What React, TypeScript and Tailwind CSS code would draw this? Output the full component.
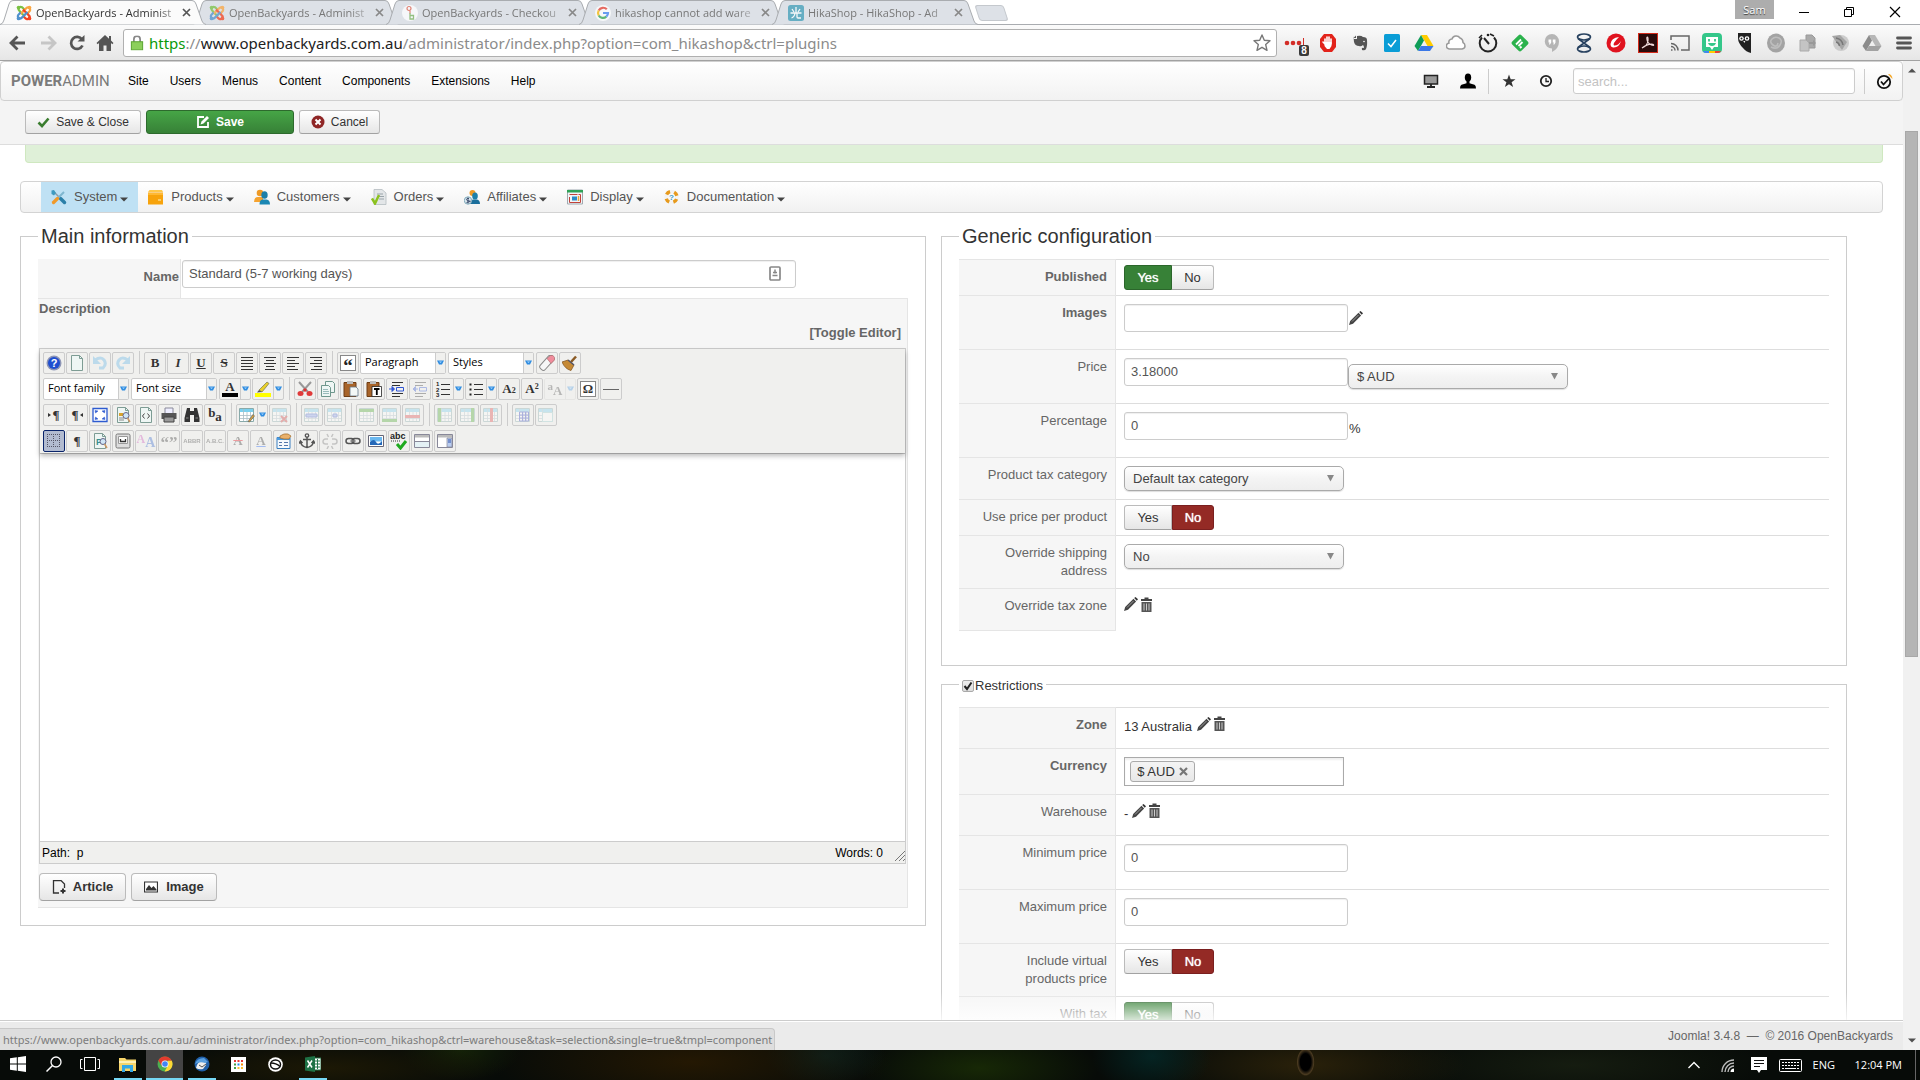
import React from "react";

type Kids = { children?: React.ReactNode };

const Svg = ({ s = 20, vb = 20, children, cls = "" }: { s?: number; vb?: number; cls?: string } & Kids) => (
  <svg width={s} height={s} viewBox={`0 0 ${vb} ${vb}`} fill="none" className={"shrink-0 " + cls} aria-hidden="true">
    {children}
  </svg>
);

/* ---------- Browser tabs ---------- */

const JoomlaIcon = () => (
  <Svg s={16} vb={16}>
    <path d="M8.500 4.500 6 2.200Q3.500 1 2.500 3.500 2 5 4 6.500L9 11.500" stroke="#7ac143" strokeWidth="2.200" />
    <path d="M11.500 8.500 13.800 6Q15 3.500 12.500 2.500 11 2 9.500 4L4.500 9" stroke="#f9a541" strokeWidth="2.200" />
    <path d="M7.500 11.500 10 13.800Q12.500 15 13.500 12.500 14 11 12 9.500L7 4.500" stroke="#f44321" strokeWidth="2.200" />
    <path d="M4.500 7.500 2.200 10Q1 12.500 3.500 13.500 5 14 6.500 12L11.500 7" stroke="#5091cd" strokeWidth="2.200" />
    <circle cx="2.600" cy="2.600" r="1.900" fill="#7ac143" />
    <circle cx="13.400" cy="2.600" r="1.900" fill="#f9a541" />
    <circle cx="13.400" cy="13.400" r="1.900" fill="#f44321" />
    <circle cx="2.600" cy="13.400" r="1.900" fill="#5091cd" />
  </Svg>
);
const BackyardIcon = () => (
  <Svg s={16} vb={16}>
    <circle cx="8" cy="8" r="8" fill="#fff" />
    <circle cx="7" cy="3.500" r="2" stroke="#e0614d" strokeWidth="1.200" />
    <path d="M8 5.500v3" stroke="#e0614d" strokeWidth="1.200" />
    <path d="M8 8v6h3.500V10.500H8" stroke="#7bb661" strokeWidth="1.300" />
  </Svg>
);
const GoogleIcon = () => (
  <Svg s={16} vb={16}>
    <circle cx="8" cy="8" r="8" fill="#fff" />
    <path d="M11.800 4.300A5 5 0 0 0 3.700 5.500" stroke="#ea4335" strokeWidth="2.200" />
    <path d="M3.700 5.500a5 5 0 0 0 0 5" stroke="#fbbc05" strokeWidth="2.200" />
    <path d="M3.700 10.500a5 5 0 0 0 7.600 1.200" stroke="#34a853" strokeWidth="2.200" />
    <path d="M8 8h5a5 5 0 0 1-1.700 3.700" stroke="#4285f4" strokeWidth="2.200" />
  </Svg>
);
const HikaIcon = () => (
  <Svg s={16} vb={16}>
    <rect width="16" height="16" rx="2.500" fill="#3f9db8" />
    <path d="M8 2v6M4 4l2 3M12 4l-2 3M2.500 8h11M7 8q-.5 4-3.500 5M9 8v4q0 1 1 1h3" stroke="#fff" strokeWidth="1.300" />
  </Svg>
);

const TABS = [
  { t: "OpenBackyards - Administ", i: <JoomlaIcon />, on: true },
  { t: "OpenBackyards - Administ", i: <JoomlaIcon /> },
  { t: "OpenBackyards - Checkou", i: <BackyardIcon /> },
  { t: "hikashop cannot add ware", i: <GoogleIcon /> },
  { t: "HikaShop - HikaShop - Ad", i: <HikaIcon /> },
];

const TabStrip = () => (
  <div className="flex h-6 items-stretch bg-white">
    {TABS.map((tab, n) => (
      <div key={n} className={"relative w-[193px] shrink-0 " + (tab.on ? "z-20" : "z-10")}>
        <svg className="absolute left-0 top-0" width="206" height="25" viewBox="0 0 206 25" fill="none" aria-hidden="true">
          <path
            d="M0 24.500Q3 24 4 20L9 4Q10 .5 13 .5H192Q195 .5 196 4L202 21Q203 24 206 24.500Z"
            fill={tab.on ? "#fbfbfb" : "#dde1e7"}
          />
          <path d="M0 24.500Q3 24 4 20L9 4Q10 .5 13 .5H192Q195 .5 196 4L202 21Q203 24 206 24.500" stroke="#a9acb0" />
        </svg>
        <div className="relative flex h-6 items-center pl-4 pt-px">
          <span className={tab.on ? "" : "opacity-75"}>{tab.i}</span>
          <button
            className={
              "ml-1 w-[142px] whitespace-nowrap text-left text-[11px] leading-4 [mask-image:linear-gradient(to_right,black_85%,#0005)] " +
              (tab.on ? "text-[#333]" : "text-[#777]")
            }
          >
            {tab.t}
          </button>
          <button className="ml-1 p-0.5" aria-label="Close tab">
            <Svg s={9} vb={9}>
              <path d="M1 1l7 7M8 1l-7 7" stroke={tab.on ? "#555" : "#888"} strokeWidth="1.700" />
            </Svg>
          </button>
        </div>
      </div>
    ))}
    <button className="ml-3 mt-[5px] h-4 w-[29px] skew-x-[18deg] rounded-[3px] border border-[#c4c8cd] bg-[#dde1e7]" aria-label="New tab" />
    <div className="flex-1" />
    <button className="mr-[25px] h-[19px] w-[39px] bg-[#adadad] text-[11px] leading-4 text-white [text-shadow:0_1px_1px_#333]">Sam</button>
    <button className="w-4" aria-label="Minimise">
      <svg width="10" height="24" className="shrink-0"><path d="M0 12.500h10" stroke="#000" /></svg>
    </button>
    <button className="ml-[29px] w-4" aria-label="Restore">
      <svg width="12" height="24" fill="none"><path d="M.5 9.500h7v7h-7zM2.500 9V7.500h7v7H8" stroke="#000" /></svg>
    </button>
    <button className="ml-[29px] mr-[19px] w-3" aria-label="Close">
      <svg width="12" height="24" fill="none"><path d="M1 7l10 10M11 7L1 17" stroke="#000" strokeWidth="1.200" /></svg>
    </button>
  </div>
);

/* ---------- Browser toolbar ---------- */

const EXT: { n: string; i: React.ReactNode }[] = [
  {
    n: "Passwords",
    i: (
      <Svg s={26} vb={26}>
        <g fill="#d32d27"><circle cx="4" cy="13" r="2.300" /><circle cx="10" cy="13" r="2.300" /><circle cx="16" cy="13" r="2.300" /></g>
        <path d="M20.500 8v10" stroke="#d32d27" />
        <rect x="16" y="15" width="10" height="11" rx="2" fill="#3a3a3a" />
        <text x="21" y="24" fontSize="10" fontWeight="700" fill="#fff" textAnchor="middle" fontFamily="Liberation Sans">8</text>
      </Svg>
    ),
  },
  {
    n: "Ad blocker",
    i: (
      <Svg><path d="M6 1h8l4 5v8l-4 5H6l-4-5V6z" fill="#e2231a" /><path d="M7 11V6M9 10V4M11 10V4M13 11V6M7 11l-2-2" stroke="#fff" strokeWidth="1.600" strokeLinecap="round" /><path d="M6.500 9h7v4l-2 3H9l-2.500-3z" fill="#fff" /></Svg>
    ),
  },
  {
    n: "Notes",
    i: (
      <Svg><path d="M4 6h3V3q4-1 6 1 4 0 4 3 .5 6-1 9-1 2-4 1-1-3 2-2 0-2-1-3-2 2-4 1-4 0-5-4-.5-4 0-6z" fill="#555" /><path d="M3.500 5L6 2.500V5z" fill="#555" /><circle cx="14" cy="8.500" r=".8" fill="#fff" /></Svg>
    ),
  },
  { n: "Tasks", i: <Svg><rect x="2" y="1" width="16" height="18" rx="1.500" fill="#0a9dd6" /><path d="M6 10.500l3 3 5-6.500" stroke="#fff" strokeWidth="1.500" /></Svg> },
  {
    n: "Drive",
    i: <Svg><path d="M7 2h6l6.500 11h-6z" fill="#fc0" /><path d="M7 2l3 5.500L4 18 .5 13z" fill="#0f9d58" /><path d="M7 13h12.500L16 18H4z" fill="#3b78e7" /></Svg>,
  },
  { n: "Cloud", i: <Svg><path d="M4 16a3 3 0 0 1-1-6 3 3 0 0 1 3-4 4.500 4.500 0 0 1 8-1q3 1 3 4.500 2 1 2 3.500t-3 3z" fill="#fff" stroke="#999" strokeWidth="1.500" /></Svg> },
  {
    n: "Timer",
    i: <Svg><path d="M4 4.500a8.300 8.300 0 1 0 12 0" stroke="#222" strokeWidth="2" /><path d="M6 5l5 6" stroke="#222" strokeWidth="2" /><circle cx="10" cy="2" r="1.300" fill="#222" /><path d="M1 5l3-3M12 1l4 2" stroke="#222" strokeWidth="1.600" /></Svg>,
  },
  { n: "Feeds", i: <Svg><rect x="3.500" y="3.500" width="13" height="13" rx="2" transform="rotate(45 10 10)" fill="#2bb24c" /><path d="M6 11.500l5-5M8.500 13l4-4M10 15l1.500-1.500" stroke="#fff" strokeWidth="1.800" /></Svg> },
  { n: "Hangouts", i: <Svg><path d="M10 1a7 7.500 0 0 1 7 7.500q0 7-7 10.500v-3.500a7 7 0 0 1 0-14.500z" fill="#b5b5b5" /><path d="M6.500 6.500h2.700v3L8 11.500H7L7.500 9.500h-1zM10.800 6.500h2.700v3l-1.200 2h-1l.5-2h-1z" fill="#fff" /></Svg> },
  { n: "Hourglass", i: <Svg><ellipse cx="10" cy="4" rx="6.500" ry="3" stroke="#27415f" strokeWidth="1.700" /><ellipse cx="10" cy="16" rx="6.500" ry="3" stroke="#27415f" strokeWidth="1.700" /><path d="M4 5.500l12 9M16 5.500l-12 9" stroke="#27415f" strokeWidth="1.700" /></Svg> },
  { n: "Security", i: <Svg><ellipse cx="10" cy="10" rx="9.500" ry="9.500" fill="#e0131f" /><path d="M13 4Q5 5 4.500 11q0 3 2.500 3.500Q13 15 15 8q-3 5-7 4.500Q6 11 13 4z" fill="#fff" /></Svg> },
  { n: "PDF", i: <Svg><rect x=".5" y=".5" width="19" height="19" fill="#2b0b0b" stroke="#d32a1a" /><path d="M4 15q5-2 6-7 .3-4-.7-4t0 4q2 4 6 4.500 1-.5-.5-1.300-5-.8-10.800 3.800z" stroke="#f1dada" strokeWidth="1.100" /></Svg> },
  { n: "Cast", i: <Svg><path d="M1 7V3h18v14h-8" stroke="#666" strokeWidth="1.500" /><path d="M1 17h1.500M1 13.500A4 4 0 0 1 5 17.500M1 10.500a7 7 0 0 1 7 7" stroke="#666" strokeWidth="1.500" /></Svg> },
  {
    n: "Stickers",
    i: <Svg><rect width="20" height="20" rx="4" fill="#34c78a" /><path d="M4 4h12v10h-4l-2 3-2-3H4z" fill="#fff" /><path d="M7 6v2.500M13 6v2.500" stroke="#34c78a" strokeWidth="1.800" /><path d="M6 10h8q-1 3-4 3t-4-3z" fill="#34c78a" /><path d="M1 18h6v2H4q-2 0-3-2z" fill="#4285f4" /><path d="M7 18h6v2H7z" fill="#fc0" /><path d="M13 18h6q-1 2-3 2h-3z" fill="#ea4335" /></Svg>,
  },
  { n: "Owl", i: <Svg><path d="M4 0h13v20q-5-1-8-5Q4 10 4 5z" fill="#222" /><circle cx="7.500" cy="5.500" r="2.300" fill="#fff" /><circle cx="13" cy="5.500" r="2.300" fill="#fff" /><circle cx="7.500" cy="5.500" r="1" fill="#222" /><circle cx="13" cy="5.500" r="1" fill="#222" /><path d="M9.300 8h2l-1 2z" fill="#fff" /></Svg> },
  { n: "Spiral", i: <Svg><ellipse cx="10" cy="10" rx="9" ry="9.500" fill="#a3a3a3" /><path d="M5 14q6 3 9-2t-1-7-7 1 1 6 5-2" stroke="#bdbdbd" strokeWidth="1.600" /></Svg> },
  { n: "Pages", i: <Svg><path d="M8 2h6l3 3v10H8z" fill="#aaa" stroke="#999" /><path d="M2 7h6l3 3v8H2z" fill="#c4c4c4" stroke="#aaa" /><path d="M11 9h4v-2l3 3-3 3v-2h-4z" fill="#999" /></Svg> },
  { n: "Feed reader", i: <Svg><circle cx="11" cy="10" r="8" fill="#ccc" /><path d="M2 3l8-1 7 7-5 8z" fill="#a5a5a5" /><path d="M6 5q6 1 7 7M6 9q3 .5 3.500 4" stroke="#777" strokeWidth="1.500" /></Svg> },
  { n: "Drive offline", i: <Svg><path d="M7 2h6l6.500 11h-6z" fill="#b7b7b7" /><path d="M7 2l3 5.500L4 18 .5 13z" fill="#8b8b8b" /><path d="M7 13h12.500L16 18H4z" fill="#a2a2a2" /></Svg> },
];

const BrowserBar = () => (
  <div className="flex h-[37px] items-center border-b border-t border-b-[#a3a3a3] border-t-[#a9acb0] bg-gradient-to-b from-[#fbfbfb] to-[#e6e6e6] pl-2">
    <button className="w-[30px]" aria-label="Back">
      <Svg><path d="M17 10H3M9.500 3.500L3 10l6.500 6.500" stroke="#555" strokeWidth="2.800" /></Svg>
    </button>
    <button className="w-[29px]" aria-label="Forward">
      <Svg><path d="M3 10h14M10.500 3.500L17 10l-6.500 6.500" stroke="#c6c6c6" strokeWidth="2.800" /></Svg>
    </button>
    <button className="w-7" aria-label="Reload">
      <Svg><path d="M15.500 12.500a6 6 0 1 1-.5-6" stroke="#555" strokeWidth="2.700" /><path d="M10.500 8.500H17.500V2z" fill="#555" /></Svg>
    </button>
    <button className="w-7" aria-label="Home">
      <Svg><path d="M10 2L1.500 10l1.200 1.200L4 10v8h4.500v-5.500h3V18H16v-8l1.300 1.200L18.500 10 16 7.600V3h-2v2.700z" fill="#555" /></Svg>
    </button>
    <div className="flex h-7 min-w-0 flex-1 items-center rounded-[3px] border border-[#b0b0b0] bg-white pl-[7px] pr-1">
      <Svg s={12} vb={12} cls="scale-125"><path d="M3.500 5.500V3a2.500 2.500 0 0 1 5 0v2.500" stroke="#888" strokeWidth="1.400" /><rect x="1.500" y="5" width="9" height="6.500" fill="#8ccf5b" stroke="#5ba432" strokeWidth=".8" /></Svg>
      <div className="ml-[6px] flex-1 whitespace-nowrap font-['Noto_Sans'] text-[15px] leading-6 text-[#8b8b8b]">
        <span className="text-[#0a9a0a]">https</span>://<span className="text-[#222]">www.openbackyards.com.au</span>/administrator/index.php?option=com_hikashop&amp;ctrl=plugins
      </div>
      <button aria-label="Bookmark">
        <Svg><path d="M10 2l2.300 5.300 5.700.5-4.300 3.800 1.300 5.700-5-3-5 3 1.300-5.700L2 7.800l5.700-.5z" stroke="#777" strokeWidth="1.400" strokeLinejoin="round" /></Svg>
      </button>
    </div>
    <div className="ml-[3px] flex">
      {EXT.map((e) => (
        <button key={e.n} aria-label={e.n} className="flex h-8 w-8 items-center justify-center">
          {e.i}
        </button>
      ))}
    </div>
    <button className="flex w-8 justify-center" aria-label="Menu">
      <Svg s={16} vb={16}><path d="M1.500 3h13M1.500 8h13M1.500 13h13" stroke="#555" strokeWidth="2.800" strokeLinecap="round" /></Svg>
    </button>
  </div>
);

/* ---------- Admin header ---------- */

const AdminBar = () => (
  <header className="flex h-10 items-center rounded-[4px] border border-[#d0d0d0] bg-gradient-to-b from-white to-[#f2f2f2] pl-[10px] pr-2 shadow-sm">
    <a href="#" className="w-[117px] font-['Liberation_Sans_Narrow','Roboto'] text-[15px] leading-5 text-[#7b7b7b]">
      <b>POWER</b>ADMIN
    </a>
    <nav className="flex flex-1 gap-[21px] text-[12px] leading-[18px] text-black">
      {["Site", "Users", "Menus", "Content", "Components", "Extensions", "Help"].map((m) => (
        <a key={m} href="#">{m}</a>
      ))}
    </nav>
    <button aria-label="View site" className="mr-[21px]">
      <Svg s={16} vb={16}><rect x="1.500" y="2.500" width="13" height="8.500" fill="#999" stroke="#222" strokeWidth="1.500" /><path d="M8 11v3M4 14h8" stroke="#222" strokeWidth="1.800" /></Svg>
    </button>
    <button aria-label="User" className="mr-3">
      <Svg s={16} vb={16}><ellipse cx="8" cy="4.500" rx="3.200" ry="4" fill="#000" /><path d="M6.500 8h3v2.300l5 1.500Q16 12.500 16 15.500H0Q0 12.500 1.500 11.800l5-1.500z" fill="#000" /></Svg>
    </button>
    <div className="h-[25px] w-px bg-[#ccc]" />
    <button aria-label="Favourites" className="ml-3 mr-[21px]">
      <Svg s={16} vb={16}><path d="M8 1.500l1.700 4.700h4.800l-3.900 3 1.500 4.800L8 11.200 3.900 14l1.500-4.800-3.900-3h4.800z" fill="#333" /></Svg>
    </button>
    <button aria-label="History" className="mr-[19px]">
      <Svg s={16} vb={16}><circle cx="8" cy="8" r="5.200" stroke="#222" strokeWidth="1.800" /><path d="M8 5v3.500h3" stroke="#222" strokeWidth="1.300" /></Svg>
    </button>
    <input aria-label="Search" placeholder="search..." className="h-[26px] w-[282px] rounded-[3px] border border-[#ccc] bg-white px-1 text-[13px] text-[#555] shadow-[inset_0_1px_1px_#0001] placeholder:text-[#c3c3c3]" />
    <div className="ml-[9px] h-[25px] w-px bg-[#ccc]" />
    <button aria-label="Status" className="ml-[11px]">
      <Svg s={18} vb={18}><circle cx="8" cy="10" r="6.200" stroke="#111" strokeWidth="1.800" /><path d="M5 9.500l2.500 3L13.500 6" stroke="#111" strokeWidth="1.800" /><path d="M12 2q4 0 4.500 5l-2-2z" fill="#f5a623" /></Svg>
    </button>
  </header>
);

const ActionBar = () => (
  <div className="flex h-11 shrink-0 items-start gap-[5px] border-b border-[#ddd] bg-[#f4f4f4] pl-[25px] pt-[9px] text-[12px] leading-4 text-[#333]">
    <button className="flex h-6 w-[116px] items-center justify-center gap-[6px] rounded-[3px] border border-[#bbb] border-b-[#a2a2a2] bg-gradient-to-b from-white to-[#e6e6e6]">
      <Svg s={13} vb={13}><path d="M1.500 6.500l3.500 3.500L11.500 2.500" stroke="#3a7d2f" strokeWidth="2.600" /></Svg>
      Save &amp; Close
    </button>
    <button className="flex h-6 w-[148px] items-center justify-center gap-[6px] rounded-[3px] border border-[#2d6a2d] bg-gradient-to-b from-[#46a546] to-[#378137] font-bold text-white">
      <Svg s={14} vb={14}><path d="M8 2H2v10h10V7" stroke="#fff" strokeWidth="1.800" /><path d="M4.500 9.500l1-3L11 1l2 2-5.500 5.500z" fill="#fff" /></Svg>
      Save
    </button>
    <button className="flex h-6 w-[81px] items-center justify-center gap-[6px] rounded-[3px] border border-[#bbb] border-b-[#a2a2a2] bg-gradient-to-b from-white to-[#e6e6e6]">
      <Svg s={14} vb={14}><circle cx="7" cy="7" r="6.500" fill="#8f2626" /><path d="M4.500 4.500l5 5M9.500 4.500l-5 5" stroke="#fff" strokeWidth="2" /></Svg>
      Cancel
    </button>
  </div>
);

/* ---------- Component menu ---------- */

const MENU: { n: string; i: React.ReactNode }[] = [
  { n: "System", i: <Svg s={16} vb={16}><path d="M2 2l8 8" stroke="#8a9ba8" strokeWidth="1.500" /><path d="M9.500 9.500l4 4" stroke="#2b7fa8" strokeWidth="3.500" strokeLinecap="round" /><path d="M13 3L7.500 8.500" stroke="#7fb6cf" strokeWidth="2" /><path d="M6.500 9.500l-4 4" stroke="#f09a2a" strokeWidth="3.300" strokeLinecap="round" /><path d="M.5 1.500L3 1l2 3-2 2.500L.5 5z" fill="#3f9bc0" /></Svg> },
  { n: "Products", i: <Svg s={16} vb={16}><path d="M0 3l1.500-2H14l1 2z" fill="#ffc84a" /><path d="M0 3.500h15V15.500H0z" fill="#f7a30c" /><path d="M0 4h15v2H0z" fill="#ffb933" /><path d="M10 11h3" stroke="#fff3c4" /></Svg> },
  { n: "Customers", i: <Svg s={16} vb={16}><circle cx="6" cy="4" r="3.300" fill="#ee9a26" /><path d="M0 13q0-5 4-5h5v5z" fill="#f5a32f" /><ellipse cx="10.500" cy="6" rx="3.200" ry="3.800" fill="#1d7fa8" /><path d="M5.500 15.500q0-4.500 3-5h4q3.500.5 3.500 5z" fill="#1b87b3" /></Svg> },
  { n: "Orders", i: <Svg s={16} vb={16}><path d="M3 .5h8L15 4v11.500H3z" fill="#e3e6e8" stroke="#b5bcc0" strokeWidth=".8" /><path d="M6 5h6M6 7.500h7M8 10h5" stroke="#9aa4aa" /><path d="M1 9.500l3 5L8 6" stroke="#8cc21f" strokeWidth="2.500" /></Svg> },
  { n: "Affiliates", i: <Svg s={16} vb={16}><circle cx="8.500" cy="4" r="3" fill="#ee9a26" /><ellipse cx="11" cy="7" rx="2.800" ry="3.500" fill="#1d7fa8" /><path d="M6 15q0-4 3-4.500h4q3 .5 3 4.500z" fill="#1b6f9c" /><circle cx="4" cy="11.500" r="3.700" fill="#dbe8ee" stroke="#7fa9bb" /><path d="M5 9.500q-2.500-.5-2.500 1t3 1.500-3 1.500M4 8.500v6" stroke="#346" strokeWidth=".9" /></Svg> },
  { n: "Display", i: <Svg s={16} vb={16}><path d="M.5 1h15v14H.5z" fill="#f3f5f7" stroke="#9fa9b0" /><path d="M0 1h16v2.500H0z" fill="#2fa257" /><path d="M2.500 5.500h8M2.500 8v5.500h11v-8h-2" stroke="#c0423a" /><path d="M5 7.500h5v4H5z" fill="#2c8cc8" /><path d="M11.500 7v5" stroke="#e8a33a" strokeWidth="1.500" /></Svg> },
  { n: "Documentation", i: <Svg s={16} vb={16}><circle cx="7.500" cy="8" r="5.500" stroke="#f3f3f3" strokeWidth="3.500" /><circle cx="7.500" cy="8" r="5.500" stroke="#e79a1c" strokeWidth="3.400" strokeDasharray="4.300 4.340" strokeDashoffset="-2.150" /><text x="7.500" y="11" textAnchor="middle" fontSize="8" fontWeight="700" fill="#3b9cc9" fontFamily="Liberation Sans">?</text></Svg> },
];

const ComponentMenu = () => (
  <nav className="mr-5 flex h-8 rounded-[4px] border border-[#d3d3d3] bg-gradient-to-b from-white to-[#f1f1f1] pl-5 text-[13px] leading-[18px] text-[#555]">
    {MENU.map((m, n) => (
      <a key={m.n} href="#" className={"flex items-center px-[10px] " + (n === 0 ? "bg-[#bfe1f4]" : "")}>
        {m.i}
        <span className="ml-[7px]">{m.n}</span>
        <svg width="8" height="5" className="ml-[3px] mt-1" aria-hidden="true"><path d="M0 .5h8L4 4.500z" fill="#444" /></svg>
      </a>
    ))}
  </nav>
);

/* ---------- Rich text editor ---------- */

const TB = ({ children, dim, on, label, w = "w-[22px]" }: { dim?: boolean; on?: boolean; label: string; w?: string } & Kids) => (
  <button
    aria-label={label}
    title={label}
    className={
      "mr-px flex h-[22px] shrink-0 items-center justify-center rounded-[2px] border font-['Liberation_Serif'] text-[13px] font-bold leading-none text-[#333] " +
      w + " " + (on ? "border-[#0a246a] bg-[#b2bbd0]" : "border-[#ccc] bg-[#f0f0ee]")
    }
  >
    <span className={"flex flex-1 items-center justify-center " + (dim ? "opacity-35" : "")}>{children}</span>
  </button>
);
const Drop = () => (
  <span className="flex h-5 w-[10px] shrink-0 items-center justify-center border-l border-[#ccc]">
    <svg width="7" height="5" aria-hidden="true"><path d="M0 .5h7L5 4.500H2z" fill="#2f8ce0" /><path d="M2 1.500h3L3.500 3z" fill="#a8d8ff" /></svg>
  </span>
);
const TBD = ({ children, label, dim }: { label: string; dim?: boolean } & Kids) => (
  <button
    aria-label={label}
    title={label}
    className={"mr-px flex h-[22px] w-8 shrink-0 items-center rounded-[2px] border border-[#ccc] font-['Liberation_Serif'] text-[13px] font-bold leading-none text-[#333] " + (dim ? "opacity-30" : "")}
  >
    <span className="flex flex-1 items-center justify-center">{children}</span>
    <Drop />
  </button>
);
const Pick = ({ t }: { t: string }) => (
  <div className="relative mr-[2px] flex w-[86px] shrink-0">
    <select aria-label={t} className="h-[22px] w-full appearance-none rounded-[2px] border border-[#ccc] bg-white pl-1 font-['Open_Sans'] text-[11px] text-black">
      <option>{t}</option>
    </select>
    <span className="pointer-events-none absolute right-px top-px bg-[#f0f0ee]"><Drop /></span>
  </div>
);
const Sep = () => <span className="mx-1 h-[23px] w-px shrink-0 bg-[#ccc]" />;
const ToolRow = ({ children }: Kids) => <div className="flex h-[23px] items-center">{children}</div>;

const Lines = ({ d }: { d: string }) => <Svg s={16} vb={16}><path d={d} stroke="#333" /></Svg>;
const Table = ({ children }: Kids) => (
  <Svg s={16} vb={16}>
    <path d="M.5 1.500h14v13H.5z" fill="#fff" stroke="#8aa" />
    <path d="M1 2h13v3H1z" fill="#7ad0ee" />
    <path d="M4.500 2v12M8 5v9M11.500 5v9M1 8.500h13M1 11.500h13" stroke="#a9bcc4" strokeWidth=".8" />
    {children}
  </Svg>
);
const Page = ({ children }: Kids) => (
  <Svg s={16} vb={16}>
    <path d="M2.500.5h8l3 3v12h-11z" fill="#eef6f4" stroke="#7d9c94" />
    <path d="M10.500.5v3h3" stroke="#7d9c94" />
    {children}
  </Svg>
);
const Lens = () => <><circle cx="11" cy="8.500" r="3" fill="#cfe6f7" stroke="#668" /><path d="M12.500 11l2.500 4" stroke="#c96" strokeWidth="1.500" /></>;

const EditorToolbar = () => (
  <div className="relative z-10 flex flex-col gap-[3px] bg-[#f0f0ee] px-[3px] pb-px pt-[2px] shadow-[0_3px_5px_#0004]">
    <ToolRow>
      <TB label="Help"><Svg s={16} vb={16}><circle cx="8" cy="8" r="7.500" fill="#8d95b5" /><circle cx="8" cy="8" r="6" fill="#1f4fd0" /><text x="8" y="12" fontSize="11" fontWeight="700" textAnchor="middle" fill="#fff" fontFamily="Liberation Sans">?</text></Svg></TB>
      <TB label="New document"><Page /></TB>
      <TB label="Undo" dim><Svg s={16} vb={16}><path d="M3 5q6-4 9 0t-1 8H7" stroke="#5db2e6" strokeWidth="3" /><path d="M1 1v8h8z" fill="#5db2e6" /></Svg></TB>
      <TB label="Redo" dim><Svg s={16} vb={16}><path d="M13 5Q7 1 4 5t1 8h4" stroke="#5db2e6" strokeWidth="3" /><path d="M15 1v8H7z" fill="#5db2e6" /></Svg></TB>
      <Sep />
      <TB label="Bold">B</TB>
      <TB label="Italic"><i>I</i></TB>
      <TB label="Underline"><u>U</u></TB>
      <TB label="Strikethrough"><s>S</s></TB>
      <TB label="Justify"><Lines d="M2 2.500h12M2 5.500h12M2 8.500h12M2 11.500h12M2 14.500h12" /></TB>
      <TB label="Align centre"><Lines d="M2 2.500h12M4 5.500h8M2 8.500h12M4 11.500h8M3 14.500h10" /></TB>
      <TB label="Align left"><Lines d="M2 2.500h12M2 5.500h8M2 8.500h12M2 11.500h8M2 14.500h11" /></TB>
      <TB label="Align right"><Lines d="M2 2.500h12M6 5.500h8M2 8.500h12M6 11.500h8M3 14.500h11" /></TB>
      <Sep />
      <TB label="Block quote"><Svg s={16} vb={16}><rect x=".5" y=".5" width="15" height="15" fill="#fff" stroke="#888" /><text x="8" y="16.500" fontSize="19" fontWeight="700" textAnchor="middle" fill="#222" fontFamily="Liberation Serif">“</text></Svg></TB>
      <Pick t="Paragraph" />
      <Pick t="Styles" />
      <TB label="Remove formatting"><Svg s={16} vb={16}><rect x="4.500" y="-.5" width="6.500" height="17" rx="2.500" transform="rotate(42 8 8)" fill="#f6f6f6" stroke="#888" /><path d="M8 3.500L11.500.5h2.500L15.500 2.500V5L12 8.500z" fill="#f08c9c" stroke="#a66" strokeWidth=".6" /></Svg></TB>
      <TB label="Clean up"><Svg s={16} vb={16}><path d="M9 7l5-5.500" stroke="#8a5a24" strokeWidth="2.500" /><path d="M6 5l6 5-3 5.500Q3 14 0 7z" fill="#c68a35" stroke="#8a5a24" strokeWidth=".8" /><path d="M6 5l6 5" stroke="#556" strokeWidth="1.500" /></Svg></TB>
    </ToolRow>
    <ToolRow>
      <Pick t="Font family" />
      <Pick t="Font size" />
      <TBD label="Text colour"><span className="flex flex-col items-center">A<span className="h-1 w-4 bg-black" /></span></TBD>
      <TBD label="Highlight colour"><Svg s={16} vb={16}><path d="M4 9l8-8 2 1.500L7 11z" fill="#e8cf2a" stroke="#775" strokeWidth=".7" /><path d="M2 11.500l2-2.500 3 2z" fill="#555" /><path d="M0 12h16v4H0z" fill="#ff0" /></Svg></TBD>
      <Sep />
      <TB label="Cut"><Svg s={16} vb={16}><path d="M2 1l9 10M14 1L5 11" stroke="#999" strokeWidth="2" /><ellipse cx="3.500" cy="12.500" rx="3" ry="2.500" fill="#e03a3a" /><ellipse cx="12.500" cy="12.500" rx="3" ry="2.500" fill="#e03a3a" /><circle cx="8" cy="9" r="1.700" fill="#d33" /></Svg></TB>
      <TB label="Copy"><Svg s={16} vb={16}><path d="M5.500.5h7l2 2v9h-9z" fill="#eef6f4" stroke="#6f978d" /><path d="M1.500 4.500h7l2 2v9h-9z" fill="#eef6f4" stroke="#6f978d" /><path d="M3 8.500h5M3 10.500h6M3 12.500h6" stroke="#9bb" /></Svg></TB>
      <TB label="Paste"><Svg s={16} vb={16}><path d="M1 1.500h12v14H1z" fill="#a8642a" stroke="#6e3d14" /><path d="M4 0h6v3H4z" fill="#bbb" /><path d="M7 6h6l2 2v7H7z" fill="#f4f8f7" stroke="#678" strokeWidth=".8" /></Svg></TB>
      <TB label="Paste as text"><Svg s={16} vb={16}><path d="M1 1.500h12v14H1z" fill="#a8642a" stroke="#6e3d14" /><path d="M4 0h6v3H4z" fill="#bbb" /><path d="M6 5.500h9.500v10H6z" fill="#fff" stroke="#222" strokeWidth=".8" /><path d="M8 8h5.500M10.800 8v6" stroke="#000" strokeWidth="1.800" /></Svg></TB>
      <TB label="Indent"><Svg s={16} vb={16}><path d="M3 1.500h11M3 4.500h8M3 12.500h11M3 15.500h8" stroke="#333" /><path d="M7.500 6.500h7v3.500h-7z" stroke="#2f55d4" /><path d="M0 8h3M3 5.500L5.500 8 3 10.500z" stroke="#2f55d4" fill="#2f55d4" /></Svg></TB>
      <TB label="Outdent" dim><Svg s={16} vb={16}><path d="M3 1.500h11M3 4.500h8M3 12.500h11M3 15.500h8" stroke="#333" /><path d="M7.500 6.500h7v3.500h-7z" stroke="#2f55d4" /><path d="M3 8h3M3.500 5.500L1 8l2.500 2.500z" stroke="#2f55d4" fill="#2f55d4" /></Svg></TB>
      <TBD label="Numbered list"><Svg s={16} vb={16}><path d="M6 3.500h9M6 8.500h9M6 13.500h9" stroke="#333" /><g fontSize="6" fontWeight="700" fill="#222" fontFamily="Liberation Sans"><text x="1" y="5">1</text><text x="1" y="10.500">2</text><text x="1" y="16">3</text></g></Svg></TBD>
      <TBD label="Bullet list"><Svg s={16} vb={16}><path d="M6 3.500h9M6 8.500h9M6 13.500h9" stroke="#333" /><path d="M1.500 2.500h2v2h-2zM1.500 7.500h2v2h-2zM1.500 12.500h2v2h-2z" fill="#222" /></Svg></TBD>
      <TB label="Subscript">A<span className="mt-1 text-[8px]">2</span></TB>
      <TB label="Superscript">A<span className="mb-1 text-[8px]">2</span></TB>
      <TBD label="Case" dim><span className="mb-1 text-[11px]">a</span><span className="mt-1">A</span></TBD>
      <TB label="Special character"><span className="flex h-4 w-4 items-center justify-center border border-[#888] bg-white">Ω</span></TB>
      <TB label="Rule"><Svg s={16} vb={16}><path d="M0 8.500h16" stroke="#666" /></Svg></TB>
    </ToolRow>
    <ToolRow>
      <TB label="Left to right"><Svg s={4} vb={4}><path d="M0 0l3 2-3 2z" fill="#333" /></Svg>¶</TB>
      <TB label="Right to left">¶<Svg s={4} vb={4}><path d="M4 0L1 2l3 2z" fill="#333" /></Svg></TB>
      <TB label="Full screen"><Svg s={16} vb={16}><path d="M1 1.500h14v13H1z" fill="#fff" stroke="#2d5bd0" strokeWidth="1.300" /><path d="M3.500 6L3 3.500 6 4zM12.500 6l.5-2.500L10 4zM3.500 10L3 12.500 6 12zM12.500 10l.5 2.500L10 12z" fill="#2d5bd0" stroke="#2d5bd0" strokeWidth=".5" /></Svg></TB>
      <TB label="Preview"><Page><path d="M4 6h4v3H4z" fill="#d8a32c" /><path d="M4 11h5M4 13h5" stroke="#888" /><Lens /></Page></TB>
      <TB label="Source"><Page><path d="M6.500 6.500L4.500 9l2 2.500M9.500 6.500l2 2.500-2 2.500" stroke="#444" /></Page></TB>
      <TB label="Print"><Svg s={16} vb={16}><path d="M4 1h8v6H4z" fill="#eef" stroke="#889" /><path d="M.5 6h15v6H.5z" fill="#555" /><path d="M3 10h10v5H3z" fill="#999" stroke="#444" /></Svg></TB>
      <TB label="Find"><Svg s={16} vb={16}><path d="M3 1h3v3h4V1h3l2.500 10v4H10V8H6v7H.5v-4z" fill="#333" /><path d="M2 11h2.500M11.500 11H14" stroke="#888" /></Svg></TB>
      <TB label="Replace"><span className="mb-1">b</span><span className="mt-1">a</span></TB>
      <Sep />
      <TBD label="Insert table"><Table><path d="M9 14.500l5-7 1.500 1.500L10.500 15z" fill="#d9a441" stroke="#555" strokeWidth=".6" /></Table></TBD>
      <TB label="Delete table" dim><Table><path d="M9 9l6 6M15 9l-6 6" stroke="#c33" strokeWidth="2" /></Table></TB>
      <Sep />
      <TB label="Row properties" dim><Table><path d="M2 7h11v3H2z" fill="#8fa4ef" stroke="#4a63c8" /></Table></TB>
      <TB label="Cell properties" dim><Table><path d="M6 7h4v3H6z" fill="#8fa4ef" stroke="#4a63c8" /></Table></TB>
      <Sep />
      <TB label="Row before" dim><Table><path d="M0 2h15v3H0z" fill="#4aa82f" /></Table></TB>
      <TB label="Row after" dim><Table><path d="M0 12h15v3H0z" fill="#4aa82f" /></Table></TB>
      <TB label="Delete row" dim><Table><path d="M0 8h15v3H0z" fill="#dd4b4b" /></Table></TB>
      <Sep />
      <TB label="Column before" dim><Table><path d="M1 1h3v14H1z" fill="#4aa82f" /></Table></TB>
      <TB label="Column after" dim><Table><path d="M11 1h3v14h-3z" fill="#4aa82f" /></Table></TB>
      <TB label="Delete column" dim><Table><path d="M7 1h3v14H7z" fill="#dd4b4b" /></Table></TB>
      <Sep />
      <TB label="Split cells" dim><Table><path d="M4.500 5h9v9h-9zM7.500 5v9M10.500 5v9M4.500 8h9M4.500 11h9" stroke="#2f3fc0" /></Table></TB>
      <TB label="Merge cells" dim><Table><path d="M4.500 5.500h10v9h-10z" fill="#fff" stroke="#9cc" /></Table></TB>
    </ToolRow>
    <ToolRow>
      <TB label="Guidelines" on><Svg s={16} vb={16}><path d="M1 1.500h13M1 7.500h13M1 13.500h13M1.500 1v13M7.500 1v13M13.500 1v13" stroke="#556" strokeDasharray="1 1" /></Svg></TB>
      <TB label="Show blocks">¶</TB>
      <TB label="Page break"><Page><text x="4" y="12" fontSize="9" fontWeight="700" fill="#3a8f8f" fontFamily="Liberation Sans">P</text><Lens /></Page></TB>
      <TB label="Non-breaking space"><Svg s={16} vb={16}><rect x="1" y="1" width="14" height="14" rx="1.500" fill="#ddd" stroke="#777" /><path d="M3.500 3.500h9v7h-9z" fill="#fff" stroke="#999" /><path d="M5.500 6v2.500h5V6" stroke="#333" strokeWidth="1.300" /></Svg></TB>
      <TB label="Style properties" dim><span className="mb-1 text-[12px] text-[#c5b]">A</span><span className="mt-1 text-[14px] text-[#36c]">A</span></TB>
      <TB label="Quotation" dim><span className="mt-1 text-[17px]">“”</span></TB>
      <TB label="Abbreviation" dim><span className="font-['Liberation_Sans'] text-[6px]">ABBR</span></TB>
      <TB label="Acronym" dim><span className="font-['Liberation_Sans'] text-[6px]">A.B.C.</span></TB>
      <TB label="Deleted text" dim><span className="line-through decoration-red-600">A</span></TB>
      <TB label="Inserted text" dim><span className="underline decoration-blue-600">A</span></TB>
      <TB label="Attributes"><Svg s={16} vb={16}><path d="M1 4.500h13v11H1z" fill="#f5f9fc" stroke="#3a7fc0" /><path d="M1 4.500h13v2.500H1z" fill="#4b9be0" /><path d="M3 9.500h3M8 9.500h4M3 12.500h3M8 12.500h4" stroke="#57a" /><path d="M4 3q4-3 8-2l3 2-2 3H8L4 5z" fill="#e9b06a" stroke="#a06a2a" strokeWidth=".7" /></Svg></TB>
      <TB label="Anchor"><Svg s={16} vb={16}><circle cx="8" cy="2.500" r="1.700" stroke="#555" strokeWidth="1.300" /><path d="M8 4v10M4 6.500h8M1.500 8.500q.5 5 6.500 6 6-1 6.500-6M0 10.500l1.500-2.500 2 2M16 10.500L14.500 8l-2 2" stroke="#555" strokeWidth="1.500" /></Svg></TB>
      <TB label="Unlink" dim><Svg s={16} vb={16}><path d="M6 6H3.500a2.500 2.500 0 0 0 0 5H6M10 6h2.500a2.500 2.500 0 0 1 0 5H10M5 1l1.500 3M11 1L9.500 4M5 16l1.500-3M11 16l-1.500-3" stroke="#777" strokeWidth="1.500" /></Svg></TB>
      <TB label="Link"><Svg s={16} vb={16}><rect x="1" y="5.500" width="8" height="5" rx="2.500" stroke="#555" strokeWidth="1.500" /><rect x="7" y="5.500" width="8" height="5" rx="2.500" stroke="#555" strokeWidth="1.500" /><path d="M5 8h6" stroke="#888" /></Svg></TB>
      <TB label="Image"><Svg s={16} vb={16}><path d="M.5 2.500h15v11H.5z" fill="#fff" stroke="#667" /><path d="M2 4h12v4.500H2z" fill="#6ab8f0" /><path d="M2 12V9q4-4 6 0t6-1v4z" fill="#2367b8" /></Svg></TB>
      <TB label="Spelling"><Svg s={18} vb={18}><text x="0" y="7" fontSize="9" fontWeight="700" fill="#222" fontFamily="Liberation Sans">abc</text><path d="M1 9h9" stroke="#333" strokeDasharray="1 1" /><path d="M7 12l3.500 4L16 9" stroke="#1faa1f" strokeWidth="3" /></Svg></TB>
      <TB label="Split view"><Svg s={16} vb={16}><path d="M.5 1.500h15v13H.5z" fill="#fff" stroke="#889" /><path d="M1 2h14v2.500H1z" fill="#bbb" /><path d="M1 8.500h14" stroke="#889" /><path d="M1 9h14v5H1z" fill="#e4f1f5" /></Svg></TB>
      <TB label="Panels"><Svg s={16} vb={16}><path d="M.5 1.500h15v13H.5z" fill="#fff" stroke="#889" /><path d="M1 2h14v2.500H1z" fill="#bbb" /><path d="M10 5h5v9h-5z" fill="#b9ccf0" stroke="#889" strokeWidth=".7" /><path d="M11 7h3M11 9h3" stroke="#35a" /></Svg></TB>
    </ToolRow>
  </div>
);

/* ---------- Form pieces ---------- */

const LEGEND = "px-[3px] text-[20px] leading-5 text-[#333]";
const FIELDSET = "min-w-0 border border-[#ccc] px-[17px]";
const INPUT = "h-7 rounded-[3px] border border-[#ccc] bg-white px-[6px] pb-[2px] text-[13px] text-[#555] shadow-[inset_0_1px_1px_#0001]";

const Pencil = () => (
  <button aria-label="Edit"><Svg s={14} vb={14}><path d="M0 14l1.200-4L9.500 1.800l2.600 2.600L4 12.700z" fill="#444" /><path d="M10.200 1L11.500 0 14 2.300l-1.200 1.400z" fill="#333" /><path d="M3 10.500L9.500 4" stroke="#999" /></Svg></button>
);
const Trash = () => (
  <button aria-label="Delete" className="ml-[3px]"><svg width="11" height="15" viewBox="0 0 11 15" fill="none" aria-hidden="true"><path d="M0 2h3.500V.5h4V2H11v2H0z" fill="#444" /><path d="M.5 5h10v10H.5z" fill="#555" /><path d="M3 6.500v7M5.500 6.500v7M8 6.500v7" stroke="#ccc" /></svg></button>
);

const Toggle = ({ name, yes }: { name: string; yes?: boolean }) => {
  const off = "border-[#bbb] border-b-[#a2a2a2] bg-gradient-to-b from-white to-[#e6e6e6] text-[#333]";
  return (
    <div className="mt-[5px] flex text-[13px] leading-[23px]" role="radiogroup" aria-label={name}>
      <label className={"w-12 rounded-l-[3px] border text-center " + (yes ? "border-[#2b662b] bg-[#378137] text-white [text-shadow:0_0_1px_#fff]" : off)}>
        <input type="radio" name={name} defaultChecked={yes} className="sr-only" />Yes
      </label>
      <label className={"w-[42px] rounded-r-[3px] border text-center " + (yes ? "border-l-0 " + off : "border-[#7a1f1f] bg-[#942a25] text-white [text-shadow:0_0_1px_#fff]")}>
        <input type="radio" name={name} defaultChecked={!yes} className="sr-only" />No
      </label>
    </div>
  );
};

const Choice = ({ id, value, cls = "mt-2" }: { id: string; value: string; cls?: string }) => (
  <div className={"relative w-[220px] " + cls}>
    <select id={id} aria-label={value} className="h-[25px] w-full appearance-none rounded-[5px] border border-[#aaa] bg-gradient-to-b from-white via-[#f4f4f4] to-[#eee] pl-2 text-[13px] text-[#444] shadow-[0_1px_1px_#0002]">
      <option>{value}</option>
    </select>
    <svg width="7" height="7" className="pointer-events-none absolute right-[10px] top-[9px]" aria-hidden="true"><path d="M0 0h7L3.500 6.500z" fill="#888" /></svg>
  </div>
);

const Row = ({ label, id, h, bold, last, children }: { label: string; id?: string; h: string; bold?: boolean; last?: boolean } & Kids) => (
  <div className={"flex " + h}>
    <label
      htmlFor={id}
      className={
        "w-[157px] shrink-0 border-r border-t border-[#e5e5e5] bg-[#f6f6f6] pl-4 pr-2 pt-2 text-right text-[13px] leading-[18px] text-[#666] " +
        (bold ? "font-bold " : "") + (last ? "border-b" : "")
      }
    >
      {label}
    </label>
    <div className="flex flex-1 items-start border-t border-[#ddd] pl-2">{children}</div>
  </div>
);

const TextBox = ({ id, v = "" }: { id: string; v?: string }) => <input id={id} defaultValue={v} className={INPUT + " mt-2 w-[224px]"} />;

const MainInfo = () => (
  <fieldset className={FIELDSET + " pb-[17px]"}>
    <legend className={LEGEND}>Main information</legend>
    <div className="mt-[13px] flex h-[39px]">
      <label htmlFor="name" className="w-[143px] shrink-0 border-r border-[#e5e5e5] bg-[#f6f6f6] pr-px pt-[9px] text-right text-[13px] font-bold leading-[18px] text-[#666]">Name</label>
      <div className="relative ml-px mt-px h-7 w-[614px]">
        <input id="name" defaultValue="Standard (5-7 working days)" className={INPUT + " w-full"} />
        <svg width="12" height="15" viewBox="0 0 12 15" fill="none" className="absolute right-[15px] top-[6px]" aria-hidden="true"><rect x="1" y="1" width="10" height="13" rx="1" stroke="#888" strokeWidth="1.700" /><path d="M6 3.500v4M4 6.500h4M3.500 9.500h5" stroke="#888" strokeWidth="1.500" /></svg>
      </div>
    </div>
    <div className="border-b border-r border-t border-[#e5e5e5] bg-[#f6f6f6] pb-[6px] pl-px">
      <div className="pt-px text-[13px] font-bold leading-[18px] text-[#666]">Description</div>
      <div className="flex h-[30px] items-end justify-end pb-[6px] pr-[6px] text-[13px] font-bold leading-[18px] text-[#666]"><a href="#">[Toggle Editor]</a></div>
      <div className="mr-px border border-[#ccc] bg-[#f0f0ee]">
        <EditorToolbar />
        <div role="textbox" aria-label="Description" contentEditable suppressContentEditableWarning className="h-[388px] border-t border-[#ccc] bg-white outline-none" />
        <div className="flex h-[22px] items-center justify-between border-t border-[#ccc] pl-[2px] text-[12px] leading-4 text-black">
          <span>Path:&nbsp; p</span>
          <span className="flex items-end">
            Words: 0
            <svg width="10" height="10" className="ml-3" fill="none" aria-hidden="true"><path d="M0 10L10 0M4 10l6-6M8 10l2-2" stroke="#777" /></svg>
          </span>
        </div>
      </div>
      <div className="mt-[9px] flex gap-[5px] text-[13px] font-bold leading-[18px] text-[#333]">
        <button className="flex h-7 w-[87px] items-center justify-center gap-[7px] rounded-[4px] border border-[#bbb] border-b-[#a2a2a2] bg-gradient-to-b from-white to-[#e6e6e6]">
          <Svg s={14} vb={14}><path d="M7 13H1.500V.5H9L12.500 4v4" stroke="#333" strokeWidth="1.300" /><path d="M11 8.500v5M8.500 11h5" stroke="#333" strokeWidth="2" /></Svg>Article
        </button>
        <button className="flex h-7 w-[86px] items-center justify-center gap-2 rounded-[4px] border border-[#bbb] border-b-[#a2a2a2] bg-gradient-to-b from-white to-[#e6e6e6]">
          <Svg s={14} vb={14}><path d="M.5 2h13v10H.5z" fill="#fff" stroke="#333" strokeWidth="1.200" /><path d="M2 10.500V9l3-4 2.500 3 2-2 3 3.500v1z" fill="#333" /></Svg>Image
        </button>
      </div>
    </div>
  </fieldset>
);

const Generic = () => (
  <fieldset className={FIELDSET + " pb-[34px]"}>
    <legend className={LEGEND}>Generic configuration</legend>
    <div className="mt-[13px]">
      <Row label="Published" h="h-9" bold><Toggle name="Published" yes /></Row>
      <Row label="Images" id="images" h="h-[54px]" bold><TextBox id="images" /><span className="ml-px mt-3"><Pencil /></span></Row>
      <Row label="Price" id="price" h="h-[54px]"><TextBox id="price" v="3.18000" /><Choice id="cur" value="$ AUD" cls="mt-[14px]" /></Row>
      <Row label="Percentage" id="pct" h="h-[54px]"><TextBox id="pct" v="0" /><span className="ml-px mt-4 text-[13px] leading-[18px] text-[#333]">%</span></Row>
      <Row label="Product tax category" id="tax" h="h-[42px]"><Choice id="tax" value="Default tax category" /></Row>
      <Row label="Use price per product" h="h-9"><Toggle name="Use price per product" /></Row>
      <Row label="Override shipping address" id="ship" h="h-[53px]"><Choice id="ship" value="No" /></Row>
      <div className="flex h-[43px]">
        <div className="w-[157px] shrink-0 border-b border-r border-t border-[#e5e5e5] bg-[#f6f6f6] pr-2 pt-2 text-right text-[13px] leading-[18px] text-[#666]">Override tax zone</div>
        <div className="flex flex-1 items-start border-t border-[#ddd] pl-2 pt-2"><Pencil /><Trash /></div>
      </div>
    </div>
  </fieldset>
);

const Restrictions = () => (
  <fieldset className={FIELDSET + " mt-[9px] pb-9"}>
    <legend className="flex h-[18px] items-center px-[3px] text-[13px] leading-[18px] text-[#333]">
      <label className="flex items-center gap-px">
        <input type="checkbox" defaultChecked className="peer sr-only" />
        <span className="mt-1 flex h-3 w-3 items-center justify-center rounded-[2px] border border-[#aaa] bg-gradient-to-b from-[#eee] to-[#ddd]">
          <Svg s={10} vb={10}><path d="M1.500 5l2.500 3L8.500 1.500" stroke="#222" strokeWidth="2" /></Svg>
        </span>
        <span className="mt-1">Restrictions</span>
      </label>
    </legend>
    <div className="mt-[14px]">
      <Row label="Zone" h="h-[41px]" bold>
        <span className="mr-[5px] mt-[10px] text-[13px] leading-[18px] text-[#333]">13 Australia</span>
        <span className="mt-2 flex"><Pencil /><Trash /></span>
      </Row>
      <Row label="Currency" h="h-[46px]" bold>
        <div className="mt-2 flex h-[29px] w-[220px] items-center border border-[#aaa] bg-white pl-[5px] shadow-[inset_0_2px_2px_#0001]">
          <span className="flex h-[21px] w-[65px] items-center justify-center gap-1 rounded-[3px] border border-[#aaa] bg-gradient-to-b from-[#f4f4f4] to-[#e8e8e8] text-[13px] leading-4 text-[#333]">
            $ AUD
            <button aria-label="Remove $ AUD"><Svg s={9} vb={9}><path d="M1 1l7 7M8 1L1 8" stroke="#777" strokeWidth="2.200" /></Svg></button>
          </span>
        </div>
      </Row>
      <Row label="Warehouse" h="h-[41px]">
        <span className="mr-1 mt-[10px] text-[13px] leading-[18px] text-[#333]">-</span>
        <span className="mt-2 flex"><Pencil /><Trash /></span>
      </Row>
      <Row label="Minimum price" id="min" h="h-[54px]"><TextBox id="min" v="0" /></Row>
      <Row label="Maximum price" id="max" h="h-[54px]"><TextBox id="max" v="0" /></Row>
      <Row label="Include virtual products price" h="h-[53px]"><Toggle name="Include virtual products price" /></Row>
      <Row label="With tax" h="h-9"><Toggle name="With tax" yes /></Row>
    </div>
  </fieldset>
);

/* ---------- Footer and taskbar ---------- */

const Footer = () => (
  <footer className="relative flex h-[30px] shrink-0 items-center justify-end border-t border-[#ccc] bg-[#ebebeb] pr-[10px] text-[12px] leading-[18px] text-[#666] shadow-[inset_0_1px_0_#fff]">
    <span>Joomla! 3.4.8&nbsp; —&nbsp; © 2016 OpenBackyards</span>
    <div className="absolute bottom-0 left-0 h-[22px] rounded-tr-[4px] border-r border-t border-[#c8c8c8] bg-[#dedede] pl-[3px] pr-[2px] font-['Noto_Sans'] text-[11px] leading-[22px] text-[#7c7c7c]">
      https://www.openbackyards.com.au/administrator/index.php?option=com_hikashop&amp;ctrl=warehouse&amp;task=selection&amp;single=true&amp;tmpl=component
    </div>
  </footer>
);

const Task = ({ label, run, on, w = "w-[37px]", children }: { label: string; run?: boolean; on?: boolean; w?: string } & Kids) => (
  <button aria-label={label} className={"flex h-full flex-col items-center " + w + (on ? " bg-[#444]" : "")}>
    <span className="flex flex-1 items-center">{children}</span>
    <span className={"h-[2px] " + (run ? "bg-[#76d8f5] " : "") + (on ? "w-full" : "w-7")} />
  </button>
);

const Taskbar = () => (
  <div className="flex h-[30px] shrink-0 items-center bg-[#070b08] bg-[radial-gradient(ellipse_180px_30px_at_17%_60%,#1c1805,transparent),radial-gradient(ellipse_60px_30px_at_24%_0%,#142208,transparent),radial-gradient(ellipse_200px_50px_at_36%_40%,#241803,transparent),radial-gradient(ellipse_60px_30px_at_43%_20%,#08201f,transparent),radial-gradient(ellipse_120px_40px_at_51%_60%,#172806,transparent),radial-gradient(ellipse_60px_40px_at_60%_20%,#052423,transparent),radial-gradient(ellipse_9px_14px_at_68%_40%,#000_60%,#4a3a20_90%,transparent),radial-gradient(ellipse_160px_40px_at_68%_50%,#2a210a,transparent),radial-gradient(ellipse_200px_40px_at_82%_50%,#151c10,transparent)] text-white">
    <Task label="Start" w="w-9"><Svg s={16} vb={16}><path d="M0 2.300L6.800 1.300V7.600H0zM7.800 1.200L16 0v7.600H7.800zM0 8.500h6.800v6.300L0 13.800zM7.800 8.500H16V16l-8.200-1.200z" fill="#fff" /></Svg></Task>
    <Task label="Search" w="w-9"><Svg s={16} vb={16}><circle cx="10" cy="6" r="5" stroke="#fff" strokeWidth="1.300" /><path d="M6.500 9.500L.5 15.500" stroke="#fff" strokeWidth="1.500" /></Svg></Task>
    <Task label="Task view" w="w-9"><svg width="20" height="14" fill="none"><path d="M4.500.5h11v13h-11zM2.500 2.500h-2v9h2M17.500 2.500h2v9h-2" stroke="#fff" /></svg></Task>
    <Task label="Files" run w="ml-px w-[37px]"><Svg s={17} vb={17}><path d="M0 2h6l1.500 1.500H17V15H0z" fill="#f7d56a" /><path d="M0 5h17v2H0z" fill="#fff0b5" /><path d="M3 9h11v7h-3v-3.500H6V16H3z" fill="#34a7e6" /></Svg></Task>
    <Task label="Chrome" run on><Svg s={16} vb={16}><circle cx="8" cy="8" r="7.500" fill="#4caf50" /><path d="M1.300 4.500A7.500 7.500 0 0 1 14.800 4.800H8L5 10z" fill="#e33b2e" /><path d="M14.800 4.800A7.500 7.500 0 0 1 7.500 15.500L11 9.500V4.800z" fill="#fdd835" /><circle cx="8" cy="8" r="3.500" fill="#fff" /><circle cx="8" cy="8" r="2.800" fill="#4285f4" /></Svg></Task>
    <Task label="Mail" run><Svg s={16} vb={16}><circle cx="8" cy="8" r="7.500" fill="#1f5fa8" /><path d="M2 12q1-6 6-7 5 0 4 4l-3 4q-4 1-7-1z" fill="#eee" /><path d="M1 8q2-6 9-6l4 4-3 1q-5-2-10 1z" fill="#5aa0e0" /><path d="M5 9l3 2 4-3" stroke="#555" /></Svg></Task>
    <Task label="Apps"><Svg s={15} vb={15}><path d="M0 0h15v15H0z" fill="#fff" /><path d="M3 3h2v2H3zM6.500 3h2v2h-2zM10 3h2v2h-2z" fill="#e53935" /><path d="M3 6.500h2v2H3z" fill="#43a047" /><path d="M6.500 6.500h2v2h-2z" fill="#1e88e5" /><path d="M10 6.500h2v2h-2z" fill="#fb8c00" /><path d="M3 10h2v2H3z" fill="#43a047" /><path d="M6.500 10h2v2h-2zM10 10h2v2h-2z" fill="#fbc02d" /></Svg></Task>
    <Task label="Sync"><Svg s={15} vb={15}><circle cx="7.500" cy="7.500" r="7.300" fill="#fff" /><ellipse cx="7.500" cy="7.500" rx="5" ry="4.500" stroke="#111" strokeWidth="1.500" /><path d="M3 6q5 0 9 3.500" stroke="#111" strokeWidth="1.500" /></Svg></Task>
    <Task label="Excel" run><Svg s={16} vb={16}><path d="M9 2h7v12H9z" fill="#fff" stroke="#1e7145" /><path d="M10 5h5M10 8h5M10 11h5M12.500 3v10" stroke="#1e7145" /><path d="M0 1.500L10 0v16L0 14.500z" fill="#1e7145" /><path d="M2.500 4.500l4.500 7M7 4.500l-4.500 7" stroke="#fff" strokeWidth="1.500" /></Svg></Task>
    <div className="flex-1" />
    <div className="flex items-center font-['Open_Sans'] text-[12px] leading-4">
      <button aria-label="Hidden icons"><svg width="12" height="8" fill="none"><path d="M.5 7L6 1.500 11.500 7" stroke="#fff" strokeWidth="1.400" /></svg></button>
      <span className="ml-[21px]"><Svg s={13} vb={13}><path d="M1 13A12 12 0 0 1 13 1M4 13a9 9 0 0 1 9-9M7 13a6 6 0 0 1 6-6" stroke="#bbb" strokeWidth="1.400" /><path d="M9.500 13a3.500 3.500 0 0 1 3.500-3.500V13z" fill="#fff" /></Svg></span>
      <button aria-label="Notifications" className="ml-[17px]"><Svg s={16} vb={16}><path d="M0 0h16v13h-6l-2 3-2-3H0z" fill="#fff" /><path d="M3 3.500h10M3 6.500h10M3 9.500h6" stroke="#111" /></Svg></button>
      <button aria-label="Keyboard" className="ml-3"><svg width="23" height="13" fill="none"><rect x=".5" y=".5" width="22" height="12" rx="1" stroke="#fff" /><path d="M3 3.500h17M3 6.500h17" stroke="#fff" strokeDasharray="2 1" /><path d="M3 9.500h2M6 9.500h11M18 9.500h2" stroke="#fff" /></svg></button>
      <span className="ml-[11px] w-[42px] text-[11px]">ENG</span>
      <time className="text-[11px]">12:04 PM</time>
      <span className="ml-[13px] mr-1 h-[30px] w-px bg-[#666]" />
    </div>
  </div>
);

export default function App() {
  return (
    <div className="flex h-screen w-full flex-col overflow-hidden bg-white font-['Liberation_Sans',Arial,sans-serif]">
      <div className="shrink-0 font-['Open_Sans','Noto_Sans',sans-serif]">
        <TabStrip />
        <BrowserBar />
      </div>
      <div className="flex min-h-0 flex-1">
        <div className="flex min-w-0 flex-1 flex-col">
          <AdminBar />
          <ActionBar />
          <main className="relative min-h-0 flex-1 overflow-hidden pl-5">
            <div className="ml-[5px] mr-5 h-[18px] rounded-b-[4px] border border-t-0 border-[#cfe8c0] bg-[#dff0d8]" />
            <div className="h-[18px]" />
            <ComponentMenu />
            <div className="mr-14 mt-[13px] grid grid-cols-2 items-start gap-[15px]">
              <MainInfo />
              <div className="min-w-0">
                <Generic />
                <Restrictions />
              </div>
            </div>
            <div className="pointer-events-none absolute inset-x-0 bottom-0 h-7 bg-gradient-to-b from-transparent to-white/80" />
          </main>
          <Footer />
        </div>
        <div className="flex w-[17px] flex-col items-center bg-[#f1f1f1]" aria-hidden="true">
          <svg width="8" height="5" className="mt-[7px]"><path d="M0 4.500h8L4 .5z" fill="#505050" /></svg>
          <div className="mt-[58px] h-[526px] w-[13px] border border-[#a8a8a8] bg-[#b5b5b5]" />
          <div className="flex-1" />
          <svg width="8" height="5" className="mb-[7px]"><path d="M0 .5h8L4 4.500z" fill="#505050" /></svg>
        </div>
      </div>
      <Taskbar />
    </div>
  );
}
